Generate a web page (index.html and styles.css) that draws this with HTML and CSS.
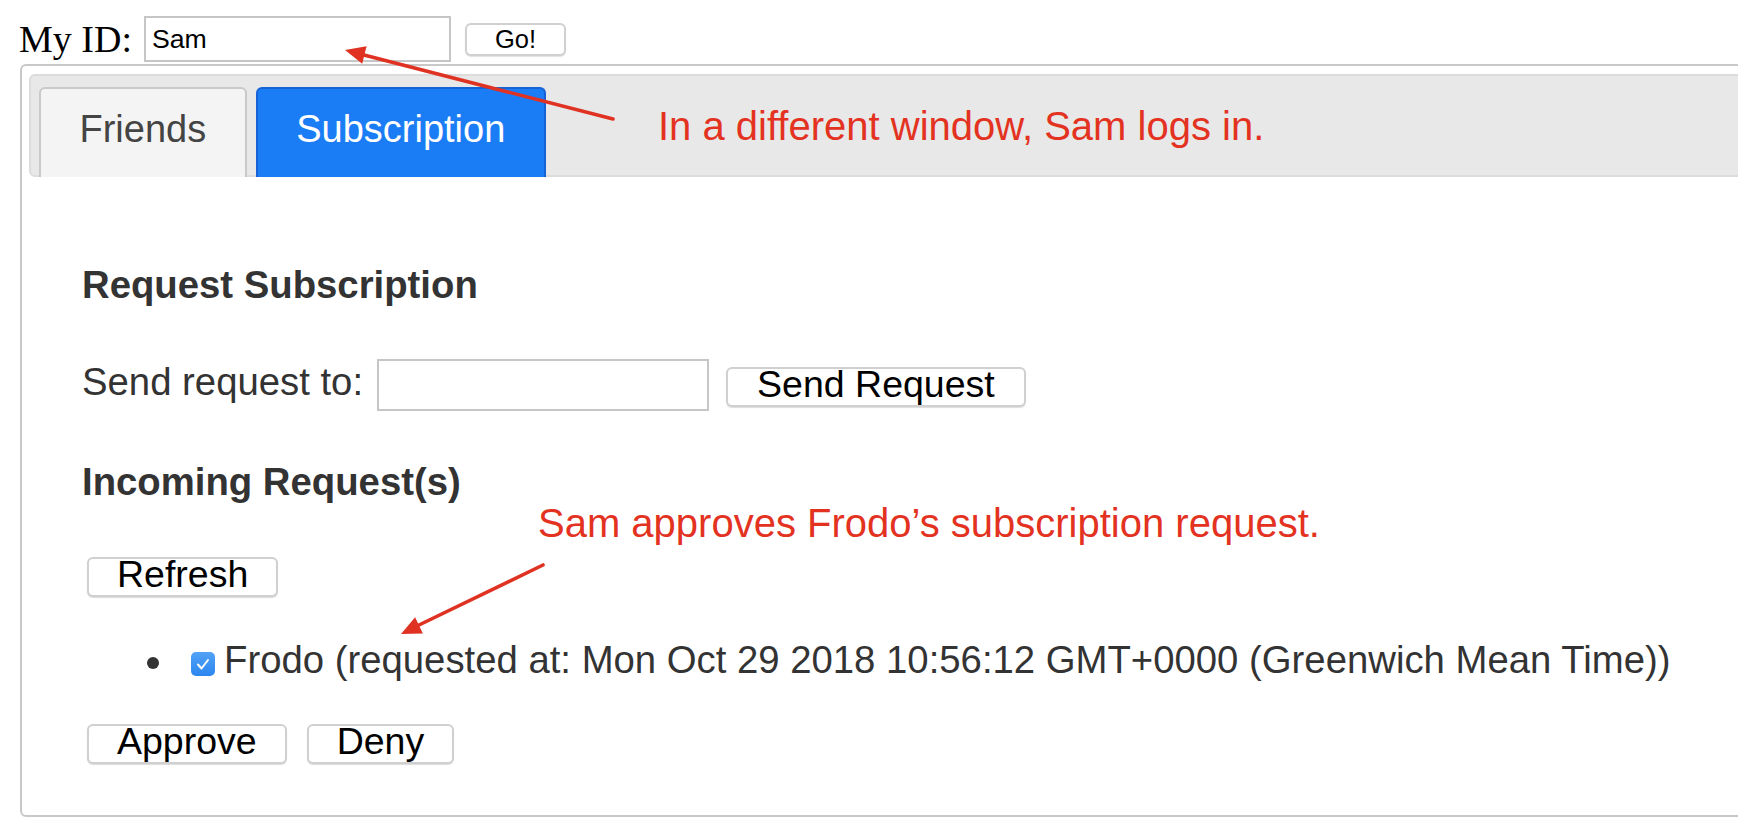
FILE: index.html
```html
<!DOCTYPE html>
<html>
<head>
<meta charset="utf-8">
<link rel="stylesheet" href="styles.css">
</head>
<body>
<div class="page">
  <div class="idrow">
    <span class="idlabel">My ID:</span>
    <input class="idinput" type="text" value="Sam">
    <button class="go">Go!</button>
  </div>
  <div class="panel">
    <div class="tabbar">
      <div class="tab tab-off">Friends</div>
      <div class="tab tab-on">Subscription</div>
    </div>
    <div class="content">
      <h3 class="heading">Request Subscription</h3>
      <div class="sendrow">
        <span class="sendlabel">Send request to:</span>
        <input class="sendinput" type="text">
        <button class="btn send">Send Request</button>
      </div>
      <h3 class="heading heading2">Incoming Request(s)</h3>
      <div class="btnrow refreshrow">
        <button class="btn">Refresh</button>
      </div>
      <ul class="reqlist">
        <li class="req">
          <span class="bullet"></span>
          <span class="check"><svg width="24" height="24" viewBox="0 0 24 24"><path d="M7 12.5 L10.5 16.5 L17 8" fill="none" stroke="#fff" stroke-width="2" stroke-linecap="round" stroke-linejoin="round"/></svg></span>
          <span class="reqtext">Frodo (requested at: Mon Oct 29 2018 10:56:12 GMT+0000 (Greenwich Mean Time))</span>
        </li>
      </ul>
      <div class="btnrow actions">
        <button class="btn">Approve</button>
        <button class="btn">Deny</button>
      </div>
    </div>
  </div>

  <div class="note note1">In a different window, Sam logs in.</div>
  <div class="note note2">Sam approves Frodo’s subscription request.</div>
  <svg class="arrows" width="1738" height="818" viewBox="0 0 1738 818">
    <line x1="613" y1="119" x2="364" y2="55" stroke="#df3222" stroke-width="3.6" stroke-linecap="round"/>
    <polygon points="345,50 362.2,63.7 366.6,46.3" fill="#df3222"/>
    <line x1="543" y1="565" x2="419" y2="625" stroke="#df3222" stroke-width="3.6" stroke-linecap="round"/>
    <polygon points="401,634 422.9,633.4 415.1,617.2" fill="#df3222"/>
  </svg>
</div>
</body>
</html>
```
FILE: styles.css
```css
html {
  overflow: hidden;
  background: #fff;
}
body {
  margin: 0;
  font-family: "Liberation Sans", Arial, sans-serif;
  color: #333;
}
.page {
  position: relative;
  width: 1738px;
  height: 818px;
  box-sizing: border-box;
  padding: 16px 0 0 19px;
}
.idrow {
  display: flex;
  align-items: flex-start;
  height: 46px;
}
.idlabel {
  font-family: "Liberation Serif", "Times New Roman", serif;
  font-size: 38px;
  line-height: 46px;
  color: #000;
  margin-right: 12px;
}
.idinput {
  width: 307px;
  height: 46px;
  box-sizing: border-box;
  border: 2px solid #c6c6c6;
  border-radius: 0;
  padding: 0 6px;
  font-family: "Liberation Sans", Arial, sans-serif;
  font-size: 26.67px;
  color: #000;
  outline: none;
  margin: 0 14px 0 0;
}
.go {
  margin-top: 7px;
  font-family: "Liberation Sans", Arial, sans-serif;
  font-size: 25.5px;
  line-height: 24px;
  padding: 2px 28px 3px;
  border: 2px solid #d0d0d0;
  border-radius: 6px;
  background: #fff;
  color: #000;
  box-shadow: 0 1px 1px rgba(0,0,0,0.12);
}
.panel {
  margin: 2px 0 0 1px;
  width: 1800px;
  box-sizing: border-box;
  border: 2px solid #c8c8c8;
  border-radius: 6px;
  padding: 8px 0 51px 7px;
}
.tabbar {
  display: flex;
  align-items: flex-start;
  height: 103px;
  box-sizing: border-box;
  background: #e8e8e8;
  border: 2px solid #dcdcdc;
  border-radius: 6px;
  padding: 11px 8px 0;
}
.tab {
  flex-shrink: 0;
  height: 90px;
  box-sizing: border-box;
  padding: 18px 38.5px 0;
  font-size: 38px;
  line-height: 44px;
  border: 2px solid;
  border-bottom: 0;
  border-radius: 6px 6px 0 0;
  margin-right: 9px;
}
.tab-off {
  background: #f4f4f4;
  border-color: #c9c9c9;
  color: #444;
}
.tab-on {
  background: #1b7df5;
  border-color: #1563d6;
  color: #fff;
}
.content {
  padding: 86px 0 0 53px;
}
.heading {
  margin: 0;
  font-size: 38.3px;
  line-height: 44px;
  font-weight: bold;
  color: #333;
}
.sendrow {
  display: flex;
  align-items: center;
  margin-top: 52px;
  height: 52px;
}
.sendlabel {
  font-size: 38.3px;
  line-height: 44px;
  margin-bottom: 6px;
}
.sendinput {
  width: 332px;
  height: 52px;
  box-sizing: border-box;
  border: 2px solid #c6c6c6;
  border-radius: 0;
  outline: none;
  margin: 0 0 0 14px;
  padding: 0 6px;
  font-size: 26.67px;
}
.btn {
  font-family: "Liberation Sans", Arial, sans-serif;
  font-size: 37.5px;
  line-height: 30px;
  padding: 0 28px 6px;
  border: 2px solid #d0d0d0;
  border-radius: 6px;
  background: #fff;
  color: #000;
  box-shadow: 0 1px 1px rgba(0,0,0,0.14);
  margin: 0;
}
.send {
  margin: 4px 0 0 17px;
  padding: 0 29px 6px;
}
.heading2 {
  margin-top: 49px;
}
.btnrow {
  display: flex;
  gap: 20px;
  padding-left: 5px;
}
.refreshrow {
  margin-top: 53px;
}
.reqlist {
  list-style: none;
  margin: 41px 0 0;
  padding: 0;
}
.req {
  display: flex;
  align-items: flex-start;
  height: 44px;
}
.bullet {
  width: 12px;
  height: 12px;
  border-radius: 50%;
  background: #333;
  margin: 19px 0 0 65px;
}
.check {
  display: block;
  width: 24px;
  height: 24px;
  border-radius: 5px;
  background: linear-gradient(#52a2f6, #2c86ef);
  margin: 14px 0 0 32px;
}
.check svg {
  display: block;
}
.reqtext {
  font-size: 38.3px;
  line-height: 44px;
  margin-left: 9px;
  white-space: nowrap;
}
.actions {
  margin-top: 42px;
}
.note {
  position: absolute;
  color: #e3321f;
  font-size: 40px;
  line-height: 44px;
  white-space: nowrap;
}
.note1 {
  left: 658px;
  top: 104px;
}
.note2 {
  left: 538px;
  top: 501px;
}
.arrows {
  position: absolute;
  left: 0;
  top: 0;
  pointer-events: none;
}
```
